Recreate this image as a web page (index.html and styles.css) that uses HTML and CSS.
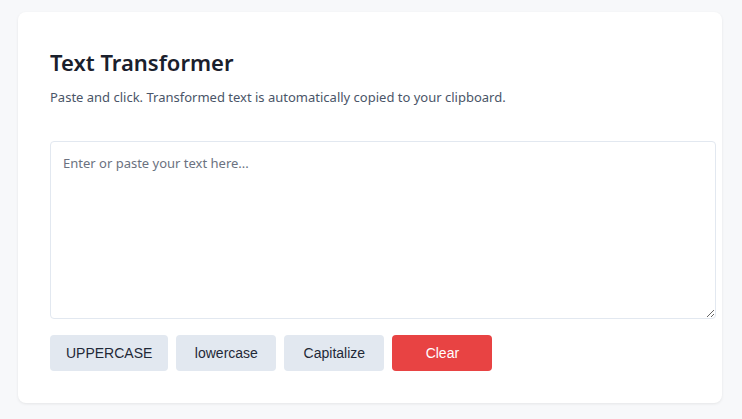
FILE: index.html
```html
<!DOCTYPE html>
<html lang="en">
<head>
<meta charset="utf-8">
<title>Text Transformer</title>
<link rel="stylesheet" href="styles.css">
</head>
<body>
  <main class="card">
    <h1 class="title">Text Transformer</h1>
    <p class="subtitle">Paste and click. Transformed text is automatically copied to your clipboard.</p>
    <textarea class="input" placeholder="Enter or paste your text here..."></textarea>
    <div class="actions">
      <button class="btn">UPPERCASE</button>
      <button class="btn">lowercase</button>
      <button class="btn">Capitalize</button>
      <button class="btn btn-danger">Clear</button>
    </div>
  </main>
</body>
</html>
```
FILE: styles.css
```css
html, body {
  margin: 0;
  background: #f7f8fa;
}
body {
  padding: 12px 20px 16px 18px;
  font-family: "Noto Sans", "Open Sans", sans-serif;
}
.card {
  background: #ffffff;
  border-radius: 8px;
  box-shadow: 0 1px 3px rgba(0, 0, 0, 0.08);
  padding: 33px 32px 32px;
}
.title {
  margin: 0 0 8px;
  font-size: 22px;
  line-height: 34px;
  font-weight: 600;
  color: #1a202c;
}
.subtitle {
  margin: 0 0 34px;
  font-size: 13px;
  line-height: 20px;
  color: #4a5568;
}
.input {
  display: block;
  width: 100%;
  height: 152px;
  padding: 12px;
  margin: 0 0 16px;
  border: 1px solid #e2e8f0;
  border-radius: 4px;
  font-family: "Noto Sans", "Open Sans", sans-serif;
  font-size: 13px;
  color: #1f2937;
  resize: vertical;
}
.input::placeholder {
  color: #6b7280;
}
.actions {
  display: flex;
  gap: 8px;
}
.btn {
  min-width: 100px;
  height: 36px;
  padding: 0 16px;
  border: none;
  border-radius: 4px;
  background: #e2e8f0;
  color: #1f2937;
  font-family: "Liberation Sans", Arial, sans-serif;
  font-size: 14px;
  cursor: pointer;
}
.btn-danger {
  background: #e84343;
  color: #ffffff;
}
```
